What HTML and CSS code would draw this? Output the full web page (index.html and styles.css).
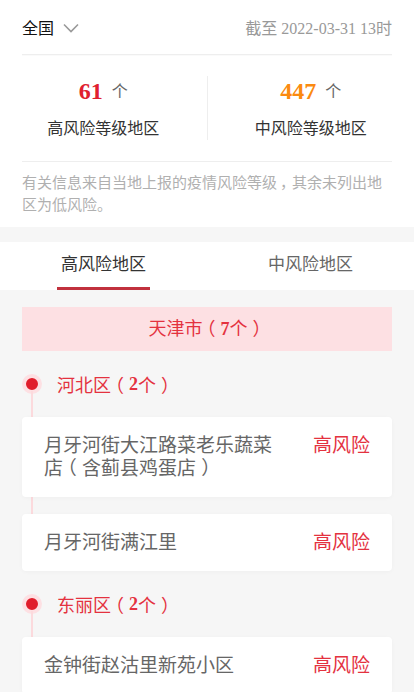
FILE: index.html
```html
<!DOCTYPE html>
<html lang="zh-CN">
<head>
    <meta charset="UTF-8">
    <meta name="viewport" content="width=device-width, initial-scale=1.0">
    <title>疫情风险等级查询</title>
    <link rel="stylesheet" href="styles.css">
</head>
<body>
    <div class="top">
        <div class="head">
            <div class="area">全国
                <svg class="arrow" width="16" height="10" viewBox="0 0 16 10"><polyline points="1,1.5 8,8.5 15,1.5" fill="none" stroke="#999" stroke-width="1.6"/></svg>
            </div>
            <div class="date">截至 2022-03-31 13时</div>
        </div>
        <div class="stats">
            <div class="stat">
                <div class="num high">61<span class="unit">个</span></div>
                <div class="label">高风险等级地区</div>
            </div>
            <div class="stat">
                <div class="num mid">447<span class="unit">个</span></div>
                <div class="label">中风险等级地区</div>
            </div>
        </div>
        <div class="note">有关信息来自当地上报的疫情风险等级<span class="comma">，</span>其余未列出地区为低风险。</div>
    </div>

    <div class="tabs">
        <div class="tab active"><span>高风险地区</span></div>
        <div class="tab"><span>中风险地区</span></div>
    </div>

    <div class="list">
        <div class="city">天津市<span class="lp">（</span><b>7</b>个<span class="rp">）</span></div>

        <div class="district">
            <div class="district-title"><i class="dot"></i>河北区<span class="lp">（</span><b>2</b>个<span class="rp">）</span></div>
            <div class="card">
                <div class="name">月牙河街大江路菜老乐蔬菜店<span class="lp">（</span>含蓟县鸡蛋店<span class="rp">）</span></div>
                <div class="level">高风险</div>
            </div>
            <div class="card">
                <div class="name">月牙河街满江里</div>
                <div class="level">高风险</div>
            </div>
        </div>

        <div class="district">
            <div class="district-title"><i class="dot"></i>东丽区<span class="lp">（</span><b>2</b>个<span class="rp">）</span></div>
            <div class="card">
                <div class="name">金钟街赵沽里新苑小区</div>
                <div class="level">高风险</div>
            </div>
            <div class="card">
                <div class="name">金钟街徐庄子村</div>
                <div class="level">高风险</div>
            </div>
        </div>
    </div>
</body>
</html>
```

FILE: styles.css
```css
body {
    margin: 0;
    background-color: #f6f6f6;
    font-family: "Liberation Serif", "Noto Sans CJK SC", serif;
    color: #333;
}

/* 全角括号居中显示 */
.lp,
.rp,
.comma {
    display: inline-block;
}

.lp {
    transform: translateX(-0.28em);
}

.rp {
    transform: translateX(0.28em);
}

.comma {
    transform: translateX(0.2em);
}

.top {
    background-color: white;
}

.head {
    height: 54px;
    margin: 0 22px;
    display: flex;
    align-items: center;
    justify-content: space-between;
    border-bottom: 1px solid #eee;
    box-shadow: 0 1px 1px rgba(0,0,0,0.02);
    font-size: 16px;
}

.area {
    color: #111;
    display: flex;
    align-items: center;
}

.arrow {
    margin-left: 9px;
    margin-top: 2px;
}

.date {
    color: #999;
}

.stats {
    height: 106px;
    display: flex;
    align-items: center;
}

.stat {
    flex: 1;
    display: flex;
    flex-direction: column;
    align-items: center;
}

.stat + .stat {
    border-left: 1px solid #eee;
}

.num {
    font-size: 24px;
    font-weight: bold;
    line-height: 30px;
}

.num.high {
    color: #e0202e;
}

.num.mid {
    color: #fb8a10;
}

.unit {
    font-size: 16px;
    font-weight: normal;
    color: #666;
    margin-left: 9px;
    vertical-align: 2px;
}

.label {
    margin-top: 11px;
    font-size: 16px;
    line-height: 22px;
    color: #333;
}

.note {
    margin: 0 22px;
    padding: 10px 0 11px;
    border-top: 1px solid #eee;
    font-size: 15px;
    line-height: 22px;
    color: #b0b0b0;
}

.tabs {
    margin-top: 15px;
    height: 48px;
    display: flex;
    background-color: white;
}

.tab {
    flex: 1;
    display: flex;
    justify-content: center;
}

.tab span {
    padding: 0 4px;
    line-height: 45px;
    font-size: 17px;
    color: #666;
    border-bottom: 3px solid transparent;
}

.tab.active span {
    color: #333;
    border-bottom-color: #c1313d;
}

.list {
    padding: 17px 22px;
}

.city {
    height: 44px;
    line-height: 44px;
    text-align: center;
    background-color: #fde0e3;
    color: #e4323f;
    font-size: 18px;
}

.district {
    position: relative;
}

.district::before {
    content: "";
    position: absolute;
    left: 9px;
    top: 40px;
    bottom: 20px;
    width: 2px;
    background-color: #fcdadd;
}

.district-title {
    height: 66px;
    display: flex;
    align-items: center;
    color: #e4323f;
    font-size: 18px;
}

.dot {
    width: 12px;
    height: 12px;
    border-radius: 50%;
    background-color: #e01e2c;
    border: 4px solid #fde0e3;
    margin-right: 15px;
}

.card {
    position: relative;
    z-index: 1;
    display: flex;
    align-items: flex-start;
    padding: 17px 22px;
    background-color: white;
    border-radius: 4px;
    box-shadow: 0 1px 4px rgba(0,0,0,0.03);
    font-size: 19px;
    line-height: 23px;
}

.card + .card {
    margin-top: 17px;
}

.name {
    flex: 1;
    margin-right: 30px;
    color: #666;
}

.level {
    color: #e4323f;
}
```
